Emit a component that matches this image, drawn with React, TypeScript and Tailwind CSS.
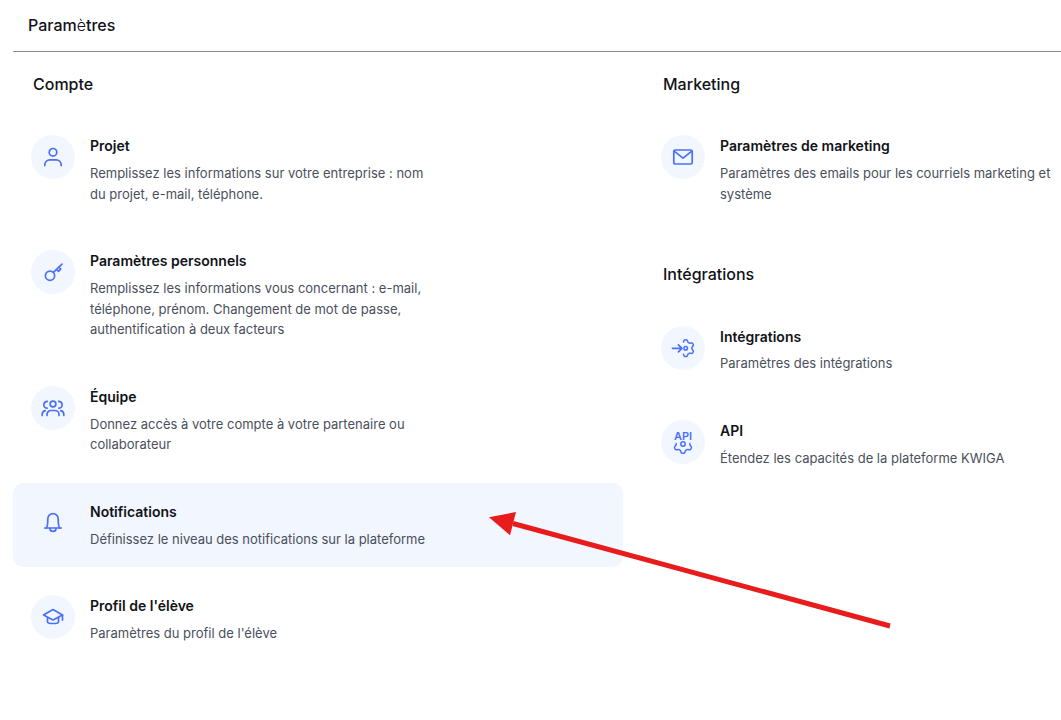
import React from 'react'

// petit engrenage : arc de "from" à "to" (degrés), dents arrondies
const gear = (cx: number, cy: number, r: number, from = 0, to = 360) => {
  const pts: string[] = []
  for (let a = from; a <= to; a += 5) {
    const rad = (a * Math.PI) / 180
    const k = r * (0.87 - 0.13 * Math.max(-1, Math.min(1, 1.5 * Math.cos(6 * rad))))
    pts.push(`${(cx + k * Math.cos(rad)).toFixed(2)} ${(cy + k * Math.sin(rad)).toFixed(2)}`)
  }
  return 'M' + pts.join(' L')
}

const Svg = ({ children }: { children: React.ReactNode }) => (
  <svg width="24" height="24" viewBox="0 0 24 24" fill="none" stroke="#4a70fb" strokeWidth="1.7" strokeLinecap="round" strokeLinejoin="round">
    {children}
  </svg>
)

const UserIcon = () => (
  <Svg>
    <circle cx="12" cy="7.300" r="3.800" />
    <path d="M3.800 20.600v-.800a5 5 0 0 1 5-5h6.400a5 5 0 0 1 5 5v.800" />
  </Svg>
)

const KeyIcon = () => (
  <Svg>
    <circle cx="9" cy="15.700" r="4.600" />
    <path d="M12.400 12.400 21 4.200M15.600 9.400l2 2 2.200-2.400-2-2" />
  </Svg>
)

const TeamIcon = () => (
  <Svg>
    <circle cx="12" cy="8" r="2.900" />
    <path d="M6.200 12.200a3.200 3.200 0 0 1 .2-6.900M17.800 12.200a3.200 3.200 0 0 0-.2-6.900" />
    <path d="M6 19.500v-1a4 4 0 0 1 4-4h4a4 4 0 0 1 4 4v1" />
    <path d="M1.200 19.500v-1.200a3.800 3.800 0 0 1 3-3.600M22.800 19.500v-1.200a3.800 3.800 0 0 0-3-3.600" />
  </Svg>
)

const BellIcon = () => (
  <Svg>
    <path d="M3.800 17h16.400" />
    <path d="M5.400 17c1-1.200 1.400-3 1.400-9.200a5.200 5.200 0 0 1 10.400 0c0 6.200.4 8 1.400 9.200" />
    <path d="M9 17.400a3 3 0 0 0 6 0" />
  </Svg>
)

const CapIcon = () => (
  <Svg>
    <path d="M2.500 10 12 4.500l9.500 5.500-9.500 5z" />
    <path d="M6.500 12.500v4.200c0 2.400 11 2.400 11 0v-4.200" />
    <path d="M21.500 10v5" />
  </Svg>
)

const MailIcon = () => (
  <Svg>
    <rect x="2.800" y="5" width="18.400" height="14" rx="1.500" />
    <path d="M3.200 6.200 12 13.200l8.800-7" />
  </Svg>
)

const IntegrationIcon = () => (
  <Svg>
    <path d="M1.500 12.300H10.700M7.400 8.800l3.500 3.500-3.500 3.500" />
    <path d={gear(14.700, 12.200, 8.400, -110, 110)} strokeWidth="1.500" />
    <circle cx="14.700" cy="12.200" r="1.800" strokeWidth="1.500" />
  </Svg>
)

const ApiIcon = () => (
  <Svg>
    <text x="12" y="9.800" textAnchor="middle" fontSize="11" fontWeight="600" fill="#4a70fb" stroke="none" fontFamily="Inter, sans-serif">API</text>
    <path d={gear(12, 14, 9.300, -5, 185)} strokeWidth="1.500" />
    <circle cx="12" cy="14" r="2.200" strokeWidth="1.500" />
  </Svg>
)

interface ItemProps {
  icon: React.ReactNode
  title: string
  desc: string
  active?: boolean
}

const Item: React.FC<ItemProps> = ({ icon, title, desc, active }) => (
  <div className={`flex gap-[15px] rounded-[10px] py-[18px] pl-[18px] pr-2 ${active ? 'bg-[#f1f6ff]' : ''}`}>
    <div className="flex h-11 w-11 shrink-0 items-center justify-center rounded-full bg-[#f1f6ff]">{icon}</div>
    <div>
      <div className="text-[14px] leading-[22px] font-semibold text-[#111318]">{title}</div>
      <p className="mt-[5.800px] -mb-[0.400px] max-w-[345px] text-[13px] leading-[20.800px] text-[#4a4f5c]">{desc}</p>
    </div>
  </div>
)

export default function App() {
  return (
    <div className="min-h-screen overflow-hidden bg-white pl-[13px] font-['Inter',sans-serif]">
      <header className="h-[52px] border-b border-[#8a8a8a] pl-[15px] pt-[15px] text-[16px] leading-[20px] font-medium text-[#111318]">
        Param<span className="font-light">è</span>tres
      </header>

      <main className="flex gap-5">
        {/* Compte */}
        <section className="w-[610px] shrink-0">
          <h2 className="pl-5 pt-[21px] pb-[21px] text-[16px] leading-[23px] font-medium text-[#111318]">Compte</h2>
          <div className="flex flex-col gap-[10px]">
            <Item icon={<UserIcon />} title="Projet" desc="Remplissez les informations sur votre entreprise : nom du projet, e-mail, téléphone." />
            <Item icon={<KeyIcon />} title="Paramètres personnels" desc="Remplissez les informations vous concernant : e-mail, téléphone, prénom. Changement de mot de passe, authentification à deux facteurs" />
            <Item icon={<TeamIcon />} title="Équipe" desc="Donnez accès à votre compte à votre partenaire ou collaborateur" />
            <Item active icon={<BellIcon />} title="Notifications" desc="Définissez le niveau des notifications sur la plateforme" />
            <Item icon={<CapIcon />} title="Profil de l'élève" desc="Paramètres du profil de l'élève" />
          </div>
        </section>

        {/* Marketing et intégrations */}
        <section className="w-[418px] shrink-0">
          <h2 className="pl-5 pt-[21px] pb-[21px] text-[16px] leading-[23px] font-medium text-[#111318]">Marketing</h2>
          <Item icon={<MailIcon />} title="Paramètres de marketing" desc="Paramètres des emails pour les courriels marketing et système" />
          <h2 className="pl-5 pt-[41px] pb-[21.600px] text-[16px] leading-[23px] font-medium text-[#111318]">Intégrations</h2>
          <div className="flex flex-col gap-[10px]">
            <Item icon={<IntegrationIcon />} title="Intégrations" desc="Paramètres des intégrations" />
            <Item icon={<ApiIcon />} title="API" desc="Étendez les capacités de la plateforme KWIGA" />
          </div>
        </section>
      </main>

      {/* flèche d'annotation */}
      <svg className="absolute left-0 top-0" width="1061" height="720" fill="none">
        <path d="M890 626 513 523.500" stroke="#e81c1c" strokeWidth="5" />
        <path d="M489 517.300 516 512 510 535.300z" fill="#e81c1c" />
      </svg>
    </div>
  )
}
